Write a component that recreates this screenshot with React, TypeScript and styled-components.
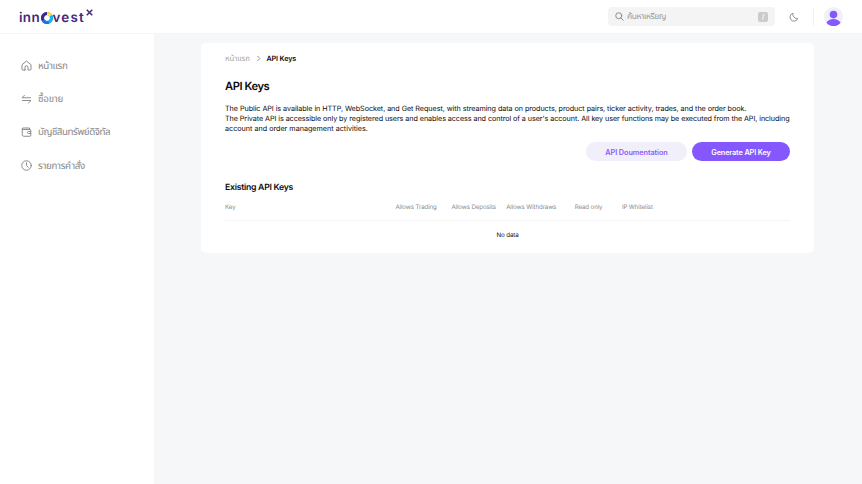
import React from "react";
import styled, { createGlobalStyle } from "styled-components";

const GlobalStyle = createGlobalStyle`
  *, *::before, *::after { box-sizing: border-box; }
  html, body { margin: 0; padding: 0; }
  body { background: #f6f7f9; overflow: hidden; }
  h1, h2, p { margin: 0; }
  button { border: 0; padding: 0; font: inherit; cursor: pointer; }
`;

const Page = styled.div`
  height: 484px;
  display: flex;
  flex-direction: column;
  font-family: Inter, "Noto Sans Thai", sans-serif;
  color: #0c0c0c;
  text-rendering: geometricPrecision;
`;

const Header = styled.header`
  flex: 0 0 34px;
  display: flex;
  align-items: center;
  padding: 0 19px;
  background: #fff;
  border-bottom: 1px solid #f4f4f5;
`;

const Logo = styled.div`
  display: flex;
  align-items: center;
  height: 22px;
  margin-right: auto;
  padding-top: 2px;
  color: #462878;
  font-size: 13.4px;
  font-weight: 600;
  line-height: 20px;
  svg { display: block; flex: none; }
`;

const LogoPart = styled.span<{ $width: number; $spacing: number }>`
  width: ${(p) => p.$width}px;
  padding-top: 1px;
  letter-spacing: ${(p) => p.$spacing}px;
  white-space: nowrap;
`;

const LogoMark = styled.svg`
  align-self: flex-start;
  width: 7px;
  height: 7px;
  margin-top: 1px;
`;

const Search = styled.div`
  display: flex;
  align-items: center;
  width: 167px;
  height: 19px;
  padding: 0 7px;
  border-radius: 4px;
  background: #f4f4f4;
  color: #999;
  font-size: 8.4px;
`;

const Placeholder = styled.span<{ $spacing: number }>`
  flex: 1;
  margin-left: 3px;
  padding-top: 1px;
  letter-spacing: ${(p) => p.$spacing}px;
  line-height: 18px;
`;

const Shortcut = styled.kbd`
  width: 10px;
  height: 10px;
  border-radius: 2px;
  background: #cbcbcb;
  color: #fff;
  font: 600 7px/10px Inter, sans-serif;
  text-align: center;
`;

const ThemeButton = styled.button`
  display: flex;
  width: 10px;
  height: 10px;
  margin-left: 14px;
  background: none;
`;

const Divider = styled.span`
  width: 1px;
  height: 19px;
  margin: 0 10px 0 14px;
  background: #f2f2f4;
`;

const Avatar = styled.svg`
  display: block;
  width: 19px;
  height: 19px;
`;

const Body = styled.div`
  flex: 1;
  display: flex;
  min-height: 0;
`;

const Sidebar = styled.nav`
  flex: 0 0 153.5px;
  display: flex;
  flex-direction: column;
  padding: 15px 21px;
  background: #fff;
`;

const NavItem = styled.a`
  display: flex;
  align-items: center;
  gap: 6px;
  height: 33.4px;
  color: #888;
  font-size: 9.8px;
  white-space: nowrap;
`;

const NavText = styled.span<{ $spacing: number }>`
  padding-top: 2px;
  letter-spacing: ${(p) => p.$spacing}px;
`;

const Main = styled.main`
  flex: 1;
  min-width: 0;
  padding: 9px 48px 0 47.5px;
`;

const Card = styled.section`
  height: 210px;
  padding: 9px 24px 0;
  border-radius: 5px;
  background: #fff;
`;

const Breadcrumb = styled.div`
  display: flex;
  align-items: center;
  height: 13px;
  color: #a8a8a8;
  font-size: 7.8px;
  svg { margin: 0 6px 0 5px; }
  strong { color: #0c0c0c; font-size: 7.2px; font-weight: 600; letter-spacing: -0.15px; }
`;

const Crumb = styled.span`
  width: 25.5px;
  padding-top: 1px;
  letter-spacing: -0.1px;
  white-space: nowrap;
`;

const Title = styled.h1`
  margin-top: 13.5px;
  font-size: 11.2px;
  font-weight: 600;
  line-height: 15px;
  letter-spacing: -0.45px;
`;

const Description = styled.div`
  margin-top: 10px;
  font-size: 7.2px;
  line-height: 10.2px;
  white-space: nowrap;
`;

const Line = styled.p<{ $spacing: number }>`
  letter-spacing: ${(p) => p.$spacing}px;
`;

const Actions = styled.div`
  display: flex;
  justify-content: flex-end;
  gap: 5px;
  margin-top: 8px;
`;

const PillButton = styled.button<{ $primary?: boolean }>`
  width: ${(p) => (p.$primary ? 98 : 101)}px;
  height: 19px;
  border-radius: 10px;
  background: ${(p) => (p.$primary ? "#8558ff" : "#f1effa")};
  color: ${(p) => (p.$primary ? "#fff" : "#8b5cff")};
  font-size: 7.3px;
  font-weight: 600;
  letter-spacing: ${(p) => (p.$primary ? -0.13 : -0.07)}px;
  line-height: 21px;
`;

const Subtitle = styled.h2`
  margin-top: 21px;
  font-size: 8.7px;
  font-weight: 600;
  line-height: 12px;
  letter-spacing: -0.27px;
`;

const TableHead = styled.div`
  display: grid;
  grid-template-columns: 170.4px 56px 54.8px 68.5px 47.2px 1fr;
  margin-top: 8px;
  height: 19px;
  border-bottom: 1px solid #f5f5f5;
  color: #8c8c8c;
  font-size: 6.2px;
  line-height: 11px;
  letter-spacing: -0.13px;
  white-space: nowrap;
`;

const Empty = styled.div`
  padding-top: 9px;
  font-size: 6.2px;
  line-height: 11px;
  letter-spacing: -0.1px;
  text-align: center;
`;

const Icon = ({ children }: { children: React.ReactNode }) => (
  <svg width="11" height="11" viewBox="0 0 22 22" fill="none" stroke="#808080" strokeWidth="1.8" strokeLinecap="round" strokeLinejoin="round">
    {children}
  </svg>
);

const navigation = [
  {
    label: "หน้าแรก",
    spacing: -0.4,
    icon: <path d="M8 20H3.5A1.5 1.5 0 0 1 2 18.5v-9L11 2l9 7.5v9a1.5 1.5 0 0 1-1.5 1.5H14v-5.500a3 3 0 0 0-6 0V20z" />,
  },
  {
    label: "ซื้อขาย",
    spacing: -0.2,
    icon: <path d="M7 2.500 2 7.500h17M3 13h17l-5 5" />,
  },
  {
    label: "บัญชีสินทรัพย์ดิจิทัล",
    spacing: -0.45,
    icon: <path d="M2.500 4v11.500a3 3 0 0 0 3 3H18a1.500 1.500 0 0 0 1.500-1.500V6.500A1.500 1.500 0 0 0 18 5H4A1.500 1.500 0 0 1 4 2h13v3M19.500 9H15a2 2 0 0 0 0 4h4.500" />,
  },
  {
    label: "รายการคำสั่ง",
    spacing: -0.35,
    icon: <><circle cx="11" cy="11" r="9.500" /><path d="M11 5.500V11l3.500 3.500" /></>,
  },
];

const description = [
  { text: "The Public API is available in HTTP, WebSocket, and Get Request, with streaming data on products, product pairs, ticker activity, trades, and the order book.", spacing: -0.052 },
  { text: "The Private API is accessible only by registered users and enables access and control of a user's account. All key user functions may be executed from the API, including", spacing: -0.064 },
  { text: "account and order management activities.", spacing: 0 },
];

const columns = ["Key", "Allows Trading", "Allows Deposits", "Allows Withdraws", "Read only", "IP Whitelist"];

export default function App() {
  return (
    <Page>
      <GlobalStyle />
      <Header>
        <Logo>
          <LogoPart $width={21.5} $spacing={0.35}>inn</LogoPart>
          <svg width="12" height="12" viewBox="0 0 24 24" fill="none" strokeWidth="6">
            <circle cx="12" cy="12" r="9" stroke="#2357c8" />
            <path d="M12 3a9 9 0 0 1 8 5" stroke="#ffe32e" />
            <path d="M20 8a9 9 0 0 1-5 12.500" stroke="#16b9e8" />
            <path d="M15 20.500A9 9 0 0 1 4 16" stroke="#1677e5" />
            <path d="M4 16A9 9 0 0 1 12 3" stroke="#43278e" />
          </svg>
          <LogoPart $width={33.5} $spacing={1.2}>vest</LogoPart>
          <LogoMark viewBox="0 0 14 14" fill="none" stroke="#462878" strokeWidth="3">
            <path d="m1.500 1.500 11 11m0-11-11 11" />
          </LogoMark>
        </Logo>
        <Search>
          <svg width="9" height="9" viewBox="0 0 18 18" fill="none" stroke="#8c8c8c" strokeWidth="2" strokeLinecap="round">
            <circle cx="7.500" cy="7.500" r="6" /><path d="m12 12 4.500 4.500" />
          </svg>
          <Placeholder $spacing={-0.4}>ค้นหาเหรียญ</Placeholder>
          <Shortcut>/</Shortcut>
        </Search>
        <ThemeButton aria-label="Theme">
          <svg width="10" height="10" viewBox="0 0 20 20" fill="none" stroke="#858585" strokeWidth="1.800" strokeLinejoin="round">
            <path d="M8 2.500A8 8 0 1 0 17.500 13 8.500 8.500 0 0 1 8 2.500z" />
          </svg>
        </ThemeButton>
        <Divider />
        <Avatar viewBox="0 0 40 40">
          <circle cx="20" cy="20" r="20" fill="#f1effa" />
          <circle cx="20" cy="16" r="8" fill="#8558ff" />
          <path d="M5 33c3-5 8-8 15-8s12 3 15 8c-4 5-9 7-15 7s-11-2-15-7z" fill="#8558ff" />
        </Avatar>
      </Header>
      <Body>
        <Sidebar>
          {navigation.map((item) => (
            <NavItem key={item.label}>
              <Icon>{item.icon}</Icon>
              <NavText $spacing={item.spacing}>{item.label}</NavText>
            </NavItem>
          ))}
        </Sidebar>
        <Main>
          <Card>
            <Breadcrumb>
              <Crumb>หน้าแรก</Crumb>
              <svg width="5" height="7" viewBox="0 0 10 14" fill="none" stroke="#888" strokeWidth="1.800"><path d="m3 2 4.500 5L3 12" /></svg>
              <strong>API Keys</strong>
            </Breadcrumb>
            <Title>API Keys</Title>
            <Description>
              {description.map((line) => <Line key={line.text} $spacing={line.spacing}>{line.text}</Line>)}
            </Description>
            <Actions>
              <PillButton>API Doumentation</PillButton>
              <PillButton $primary>Generate API Key</PillButton>
            </Actions>
            <Subtitle>Existing API Keys</Subtitle>
            <TableHead>{columns.map((column) => <span key={column}>{column}</span>)}</TableHead>
            <Empty>No data</Empty>
          </Card>
        </Main>
      </Body>
    </Page>
  );
}
